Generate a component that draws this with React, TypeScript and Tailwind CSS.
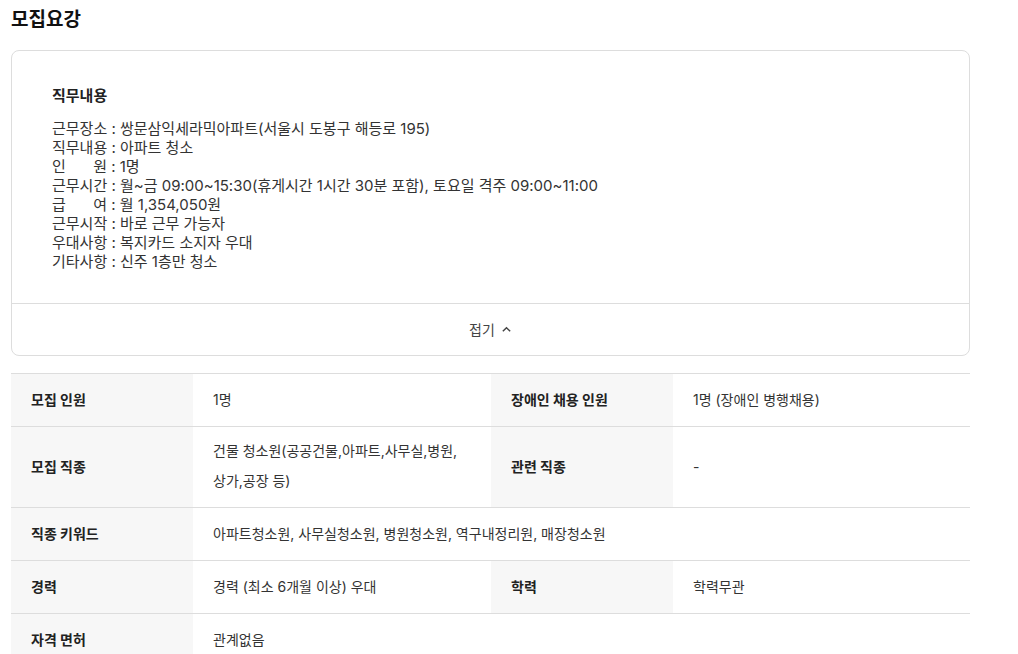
import React from "react";

const font = { fontFamily: 'Inter, "Noto Sans CJK KR", sans-serif' };

const duties: [string, string][] = [
  ["근무장소", "쌍문삼익세라믹아파트(서울시 도봉구 해등로 195)"],
  ["직무내용", "아파트 청소"],
  ["인원", "1명"],
  ["근무시간", "월~금 09:00~15:30(휴게시간 1시간 30분 포함), 토요일 격주 09:00~11:00"],
  ["급여", "월 1,354,050원"],
  ["근무시작", "바로 근무 가능자"],
  ["우대사항", "복지카드 소지자 우대"],
  ["기타사항", "신주 1층만 청소"],
];

function Label({ text }: { text: string }) {
  if (text.length === 2) {
    return (
      <span className="inline-flex w-[55px] shrink-0 justify-between whitespace-nowrap">
        <span>{text[0]}</span>
        <span>{text[1]}</span>
      </span>
    );
  }
  return <span className="shrink-0 whitespace-nowrap">{text}</span>;
}

function Th({ children, h }: { children: React.ReactNode; h?: string }) {
  return (
    <div className={`flex items-center bg-[#f7f7f7] px-5 pb-[2px] text-[14px] font-bold text-[#222] ${h ?? ""}`}>
      {children}
    </div>
  );
}

function Td({ children, span }: { children: React.ReactNode; span?: boolean }) {
  return (
    <div
      className={`flex items-center px-5 pb-[2px] text-[14px] text-[#333] ${span ? "col-span-3" : ""}`}
    >
      {children}
    </div>
  );
}

export default function App() {
  return (
    <div className="min-h-screen bg-white pl-[11px] pr-[48px]" style={font}>
      <h2 className="pt-[6px] text-[19px] font-bold leading-[28px] text-[#111]">모집요강</h2>

      <div className="mt-[16px] rounded-lg border border-[#dddddd]">
        <div className="px-10 pb-[32px] pt-[33px]">
          <h3 className="mb-[11px] text-[15px] font-bold leading-[24px] text-[#222]">직무내용</h3>
          <div className="text-[15px] leading-[19px] text-[#333]">
            {duties.map(([k, v]) => (
              <div key={k} className="flex whitespace-pre">
                <Label text={k} />
                <span> : </span>
                <span>{v}</span>
              </div>
            ))}
          </div>
        </div>
        <div className="flex h-[52px] items-center justify-center gap-[6px] border-t border-[#dddddd] text-[14px] text-[#444]">
          <span>접기</span>
          <svg width="11" height="11" viewBox="0 0 12 12" fill="none">
            <path d="M2 8 L6 4 L10 8" stroke="#444" strokeWidth="1.6" />
          </svg>
        </div>
      </div>

      <div className="mt-[17px] grid grid-cols-[182px_298px_182px_1fr] border-t border-[#dddddd] [&>div]:border-b [&>div]:border-[#dddddd]">
        <Th h="h-[53px]">모집 인원</Th>
        <Td>1명</Td>
        <Th>장애인 채용 인원</Th>
        <Td>1명 (장애인 병행채용)</Td>

        <Th h="h-[81px]">모집 직종</Th>
        <div className="flex items-center px-5 pb-[2px] text-[14px] leading-[30px] text-[#333]">
          건물 청소원(공공건물,아파트,사무실,병원,
          <br />
          상가,공장 등)
        </div>
        <Th>관련 직종</Th>
        <Td>-</Td>

        <Th h="h-[53px]">직종 키워드</Th>
        <Td span>아파트청소원, 사무실청소원, 병원청소원, 역구내정리원, 매장청소원</Td>

        <Th h="h-[53px]">경력</Th>
        <Td>경력 (최소 6개월 이상) 우대</Td>
        <Th>학력</Th>
        <Td>학력무관</Td>

        <Th h="h-[53px]">자격 면허</Th>
        <Td span>관계없음</Td>
      </div>
    </div>
  );
}
